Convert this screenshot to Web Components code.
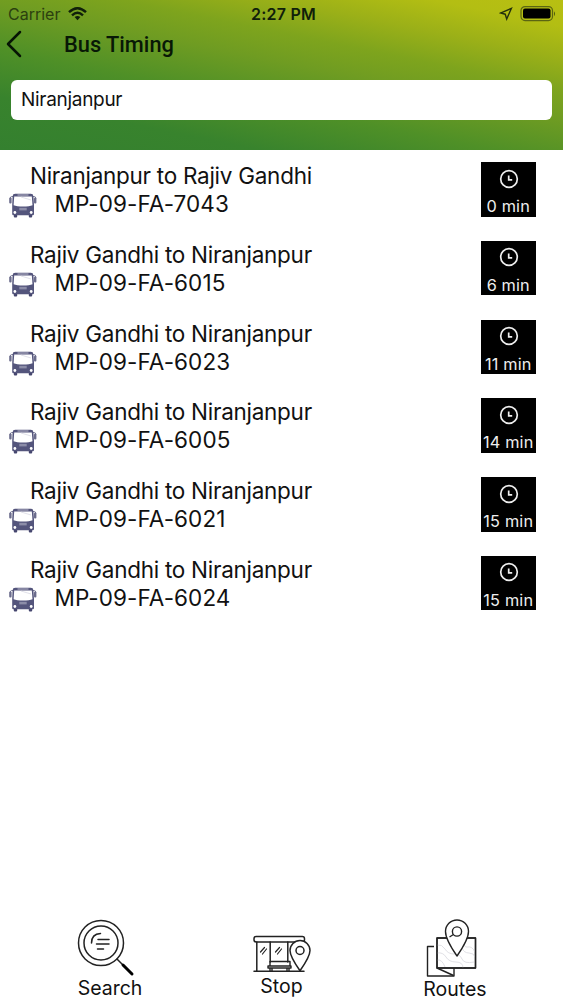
<!DOCTYPE html>
<html lang="en">
<head>
<meta charset="utf-8">
<title>Bus Timing</title>
<style>
  body {
    margin: 0;
    background: #fff;
    color: #111;
    font-family: Inter, "Liberation Sans", sans-serif;
  }
</style>
</head>
<body>
<bus-app></bus-app>

<script>
function attach(el, html) {
  const template = document.createElement('template');
  template.innerHTML = html;
  el.attachShadow({ mode: 'open' }).appendChild(template.content.cloneNode(true));
}

class StatusBar extends HTMLElement {
  constructor() {
    super();
    attach(this, `
      <style>
        :host {
          display: grid;
          grid-template-columns: 1fr auto 1fr;
          align-items: center;
          height: 28px;
          padding: 0 7px 0 8px;
          box-sizing: border-box;
          font-size: 16px;
          line-height: 20px;
          color: #10200a;
        }
        .left, .right { display: flex; align-items: center; }
        .left { gap: 8px; color: #2c400f; }
        .right { justify-content: flex-end; gap: 7px; }
        .time { font-weight: 600; font-size: 16px; letter-spacing: 0.250px; padding-left: 3px; }
        svg { display: block; }
      </style>
      <div class="left">
        <span>Carrier</span>
        <svg width="19" height="14" viewBox="0 0 19 14" fill="none" stroke="#10200a" stroke-width="2.500">
          <path d="M1 5.200Q9.500-2.600 18 5.200"/>
          <path d="M4 8.300Q9.500 3.300 15 8.300"/>
          <path d="M6.600 10.100Q9.500 7.800 12.400 10.100L9.500 13.200z" fill="#10200a" stroke="none"/>
        </svg>
      </div>
      <span class="time">2:27 PM</span>
      <div class="right">
        <svg width="14" height="14" viewBox="0 0 14 14" fill="none" stroke="#23300c" stroke-width="1.400">
          <path d="M12.400 1.300L1.500 6L6.200 7.200L7.700 12z"/>
        </svg>
        <svg width="36" height="16" viewBox="0 0 36 16">
          <rect x="1" y=".6" width="31.500" height="14" rx="4" fill="none" stroke="#5b6512" stroke-width="1.200"/>
          <rect x="3" y="2.600" width="27.500" height="10" rx="2" fill="#000"/>
          <path d="M34 5.200q2 2.500 0 5z" fill="#4c5710"/>
        </svg>
      </div>
    `);
  }
}

class AppHeader extends HTMLElement {
  constructor() {
    super();
    attach(this, `
      <style>
        :host {
          display: flex;
          flex-direction: column;
          height: 149.500px;
          background: linear-gradient(11.500deg, #34802f 0%, #38832d 20%, #4f9027 38%, #6f9c22 55%, #7ea41d 66%, #9bb018 78%, #b3be13 90%, #b8bf12 100%);
        }
        .title { display: flex; align-items: center; height: 31px; padding-left: 6px; }
        svg { display: block; margin-right: 42px; }
        h1 {
          margin: 0;
          padding-top: 2px;
          font: 500 21.800px/30px Roboto, sans-serif;
          color: #081806;
        }
        .field {
          margin: 21px 11px 0;
          height: 40px;
          padding-left: 10px;
          border-radius: 6px;
          background: #fff;
          font-size: 19px;
          letter-spacing: -0.300px;
          line-height: 40px;
        }
      </style>
      <status-bar></status-bar>
      <div class="title">
        <svg width="16" height="28" viewBox="0 0 16 28" fill="none" stroke="#071505" stroke-width="2.500" stroke-linecap="round" stroke-linejoin="round">
          <path d="M14 2L2 14L14 26"/>
        </svg>
        <h1><slot></slot></h1>
      </div>
      <div class="field"><slot name="stop"></slot></div>
    `);
  }
}

class BusIcon extends HTMLElement {
  constructor() {
    super();
    attach(this, `
      <style>
        :host { display: block; width: 28px; height: 26px; }
        svg { display: block; }
      </style>
      <svg width="28" height="26" viewBox="0 0 28 26">
        <path d="M4 3.500H2.500Q1.300 3.500 1.300 5.500M24 3.500h1.500q1.200 0 1.200 2" fill="none" stroke="#777894" stroke-width="1"/>
        <rect x=".2" y="4.500" width="2.400" height="6" rx="1" fill="#6b6c8c"/>
        <rect x="25" y="4.500" width="2.400" height="6" rx="1" fill="#6b6c8c"/>
        <path d="M4.800 22h3.400v1.500q0 1-1 1H5.800q-1 0-1-1zM19.800 22h3.400v1.500q0 1-1 1h-1.400q-1 0-1-1z" fill="#45466e"/>
        <path d="M6.200.8h15.600q2.500 0 2.600 2.400L25 12v9q0 1.300-1.300 1.300H4.500Q3.200 22.300 3.200 21v-9l.4-8.800Q3.700.8 6.200.8z" fill="#54557c"/>
        <path d="M8.500 2h11" stroke="#b9b9ca" stroke-width="1"/>
        <path d="M5.200 3.600h17.600l.7 8.600q-3 1.300-9.400 1.300t-9.500-1.300z" fill="#fff"/>
        <path d="M12 4l10 3" stroke="#d4d4e0" stroke-width=".7"/>
        <rect x="10.300" y="14.800" width="7.400" height="2.600" fill="#8c8da8"/>
        <circle cx="5.900" cy="19.500" r="1.400" fill="#fff"/>
        <circle cx="22.200" cy="19.500" r="1.400" fill="#fff"/>
      </svg>
    `);
  }
}

class BusRow extends HTMLElement {
  constructor() {
    super();
    attach(this, `
      <style>
        :host {
          display: flex;
          justify-content: space-between;
          align-items: flex-start;
          height: 78.800px;
          padding: 0 27.500px 0 9px;
          box-sizing: border-box;
        }
        .route { padding-left: 21px; letter-spacing: -0.270px; }
        .route, .plate { font-size: 22.500px; line-height: 28px; white-space: nowrap; }
        .bus { display: flex; }
        .plate { padding-left: 17.500px; letter-spacing: 0.080px; }
        bus-icon { margin-top: 3px; }
        .eta {
          display: flex;
          flex-direction: column;
          align-items: center;
          width: 54.500px;
          height: 54.500px;
          background: #000;
          color: #eee;
          font-size: 16.300px;
          letter-spacing: 0.150px;
          line-height: 18px;
          white-space: nowrap;
        }
        .eta svg { display: block; margin: 6.500px 0 8.500px 1px; }
      </style>
      <div>
        <div class="route"><slot></slot></div>
        <div class="bus">
          <bus-icon></bus-icon>
          <div class="plate"><slot name="plate"></slot></div>
        </div>
      </div>
      <div class="eta">
        <svg width="20" height="20" viewBox="0 0 20 20" fill="none" stroke="#eee" stroke-width="1.700">
          <circle cx="10" cy="10" r="8.300"/>
          <path d="M9.700 6.500v4.300h3.500"/>
        </svg>
        <slot name="eta"></slot>
      </div>
    `);
  }
}

const tabIcons = {
  search: `
    <svg width="58" height="58" viewBox="0 0 58 58" fill="none" stroke="#222" stroke-width="1.500" stroke-linecap="round">
      <circle cx="24" cy="24" r="22.500"/>
      <circle cx="24" cy="24" r="17"/>
      <path d="M14.500 24q0-9 9-9.500M21 20.500h11M19.500 25h12.500M20.500 30h6"/>
      <path d="M40 40l6 6"/>
      <path d="M46 46l9 9" stroke="#000" stroke-width="3"/>
    </svg>`,
  stop: `
    <svg width="58" height="38" viewBox="0 0 58 38" fill="none" stroke="#222" stroke-width="1.500" stroke-linejoin="round" stroke-linecap="round">
      <rect x="1" y="1.500" width="50.500" height="5.500" rx="2.200"/>
      <path d="M3.800 7v29M17.200 7v20M1 36.300h50M34.800 7v20"/>
      <path d="M7.500 17l4-4.500M9.500 19l4-5M22.500 17l4-4.500M24.500 19l4-5" stroke-width="1.200"/>
      <path d="M17 26.500h20v4.500H17zM15 31h23v2H15zM17 33v3M19 33v3M34 33v3M36 33v3" stroke-width="1.400"/>
      <path d="M47 35.800Q37 21.500 37 15.500a10 10 0 0 1 20 0Q57 21.500 47 35.800z" fill="#fff"/>
      <circle cx="47" cy="15.500" r="4"/>
    </svg>`,
  routes: `
    <svg width="52" height="59" viewBox="0 0 52 59" fill="none" stroke="#222" stroke-width="1.400" stroke-linejoin="round">
      <path d="M8 27.500H1.500V57H28v-8"/>
      <path d="M11 19h38.500v30H11z" fill="#fff"/>
      <path d="M11 26q5-1 8 4t9 5 8 5 12 3M11 34q6-1 9 4t10 5 7 6M36 22q2 7 6 6t7 5M36 29q2 5 7 5t6 4M11 41q5-1 8 7" stroke="#dcdce2" stroke-width=".9"/>
      <path d="M11 19h38.500v30H11z"/>
      <path d="M11 49l16.500 7.500"/>
      <path d="M31 37Q19.500 20.500 19.500 12.500a11.500 11.500 0 0 1 23 0Q42.500 20.500 31 37z" fill="#fff"/>
      <circle cx="31" cy="12.500" r="4.600"/>
      <path d="M27.500 15.500l-4 2.500"/>
    </svg>`
};

class TabItem extends HTMLElement {
  constructor() {
    super();
    attach(this, `
      <style>
        :host {
          display: flex;
          flex-direction: column;
          align-items: center;
          font-size: 19.500px;
          line-height: 22px;
        }
        svg { display: block; }
        :host([icon="search"]) svg { margin-right: 8px; }
        :host([icon="stop"]) svg { margin-bottom: 2px; }
        :host([icon="routes"]) svg { margin-right: 6px; }
      </style>
      ${tabIcons[this.getAttribute('icon')]}
      <slot></slot>
    `);
  }
}

class BusApp extends HTMLElement {
  constructor() {
    super();
    attach(this, `
      <style>
        :host { display: flex; flex-direction: column; height: 1000px; overflow: hidden; }
        main { flex: 1; padding-top: 12.500px; }
        nav {
          display: grid;
          grid-template-columns: 220px 123px 1fr;
          align-items: end;
          height: 100px;
        }
        tab-item[icon="search"] { padding-bottom: 1px; }
        tab-item[icon="stop"] { padding-bottom: 3px; }
        tab-item[icon="routes"] { padding-left: 4px; }
      </style>
      <app-header>Bus Timing<span slot="stop">Niranjanpur</span></app-header>
      <main></main>
      <nav>
        <tab-item icon="search">Search</tab-item>
        <tab-item icon="stop">Stop</tab-item>
        <tab-item icon="routes">Routes</tab-item>
      </nav>
    `);
    const buses = [
      ['Niranjanpur to Rajiv Gandhi', 'MP-09-FA-7043', '0 min'],
      ['Rajiv Gandhi to Niranjanpur', 'MP-09-FA-6015', '6 min'],
      ['Rajiv Gandhi to Niranjanpur', 'MP-09-FA-6023', '11 min'],
      ['Rajiv Gandhi to Niranjanpur', 'MP-09-FA-6005', '14 min'],
      ['Rajiv Gandhi to Niranjanpur', 'MP-09-FA-6021', '15 min'],
      ['Rajiv Gandhi to Niranjanpur', 'MP-09-FA-6024', '15 min']
    ];
    this.shadowRoot.querySelector('main').innerHTML = buses.map(([route, plate, eta]) =>
      `<bus-row>${route}<span slot="plate">${plate}</span><span slot="eta">${eta}</span></bus-row>`
    ).join('');
  }
}

customElements.define('status-bar', StatusBar);
customElements.define('app-header', AppHeader);
customElements.define('bus-icon', BusIcon);
customElements.define('bus-row', BusRow);
customElements.define('tab-item', TabItem);
customElements.define('bus-app', BusApp);
</script>
</body>
</html>
